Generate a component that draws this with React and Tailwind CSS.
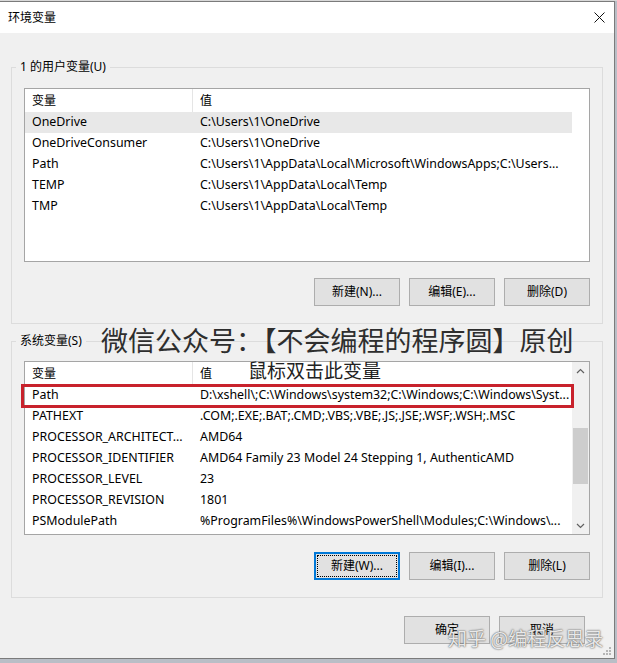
import React from 'react';

const FONT = { fontFamily: '"Noto Sans", "Noto Sans CJK SC", sans-serif' };

const userVars = [
  ['OneDrive', 'C:\\Users\\1\\OneDrive'],
  ['OneDriveConsumer', 'C:\\Users\\1\\OneDrive'],
  ['Path', 'C:\\Users\\1\\AppData\\Local\\Microsoft\\WindowsApps;C:\\Users...'],
  ['TEMP', 'C:\\Users\\1\\AppData\\Local\\Temp'],
  ['TMP', 'C:\\Users\\1\\AppData\\Local\\Temp'],
];

const sysVars = [
  ['Path', 'D:\\xshell\\;C:\\Windows\\system32;C:\\Windows;C:\\Windows\\Syst...'],
  ['PATHEXT', '.COM;.EXE;.BAT;.CMD;.VBS;.VBE;.JS;.JSE;.WSF;.WSH;.MSC'],
  ['PROCESSOR_ARCHITECT...', 'AMD64'],
  ['PROCESSOR_IDENTIFIER', 'AMD64 Family 23 Model 24 Stepping 1, AuthenticAMD'],
  ['PROCESSOR_LEVEL', '23'],
  ['PROCESSOR_REVISION', '1801'],
  ['PSModulePath', '%ProgramFiles%\\WindowsPowerShell\\Modules;C:\\Windows\\...'],
];

function WinButton({ children, focused }) {
  return (
    <button
      type="button"
      className={
        'h-[28px] w-[86px] bg-[#e1e1e1] text-[12px] text-black flex items-center justify-center ' +
        (focused ? 'border-2 border-[#0078d7] p-[1px]' : 'border border-[#adadad]')
      }
    >
      {focused ? (
        <span className="w-full h-full flex items-center justify-center border border-dotted border-black">
          {children}
        </span>
      ) : (
        children
      )}
    </button>
  );
}

function Row({ name, value, selected, marked }) {
  return (
    <div className={'relative flex h-[21px] items-center text-[12.4px] ' + (selected ? 'bg-[#e8e8e8]' : '')}>
      <div className="w-[168px] shrink-0 pl-[7px] whitespace-nowrap overflow-hidden">{name}</div>
      <div className="flex-1 pl-[7px] whitespace-nowrap overflow-hidden">{value}</div>
      {marked && (
        <div className="absolute -left-[4px] -right-[2px] -top-[1px] -bottom-[2px] border-[3px] border-[#c8222c]" />
      )}
    </div>
  );
}

function ListBox({ rows, scroll, markFirst }) {
  return (
    <div className="mx-[12px] h-[174px] border border-[#a5a5a5] bg-white flex">
      <div className="flex-1 flex flex-col">
        <div className="flex h-[23px] items-center">
          <div className="w-[168px] shrink-0 pl-[7px] h-full flex items-center border-r border-[#e5e5e5]">变量</div>
          <div className="flex-1 pl-[7px]">值</div>
        </div>
        {rows.map(([n, v], i) => (
          <Row key={n} name={n} value={v} selected={!scroll && i === 0} marked={markFirst && i === 0} />
        ))}
      </div>
      {scroll ? (
        <div className="w-[17px] bg-[#f0f0f0] flex flex-col items-center">
          <div className="h-[17px] w-full flex items-center justify-center">
            <svg width="9" height="6" viewBox="0 0 9 6">
              <path d="M1 5 L4.5 1.5 L8 5" fill="none" stroke="#606060" strokeWidth="1.2" />
            </svg>
          </div>
          <div className="mt-[49px] h-[56px] w-[15px] bg-[#cdcdcd]" />
          <div className="flex-1" />
          <div className="h-[17px] w-full flex items-center justify-center">
            <svg width="9" height="6" viewBox="0 0 9 6">
              <path d="M1 1 L4.5 4.5 L8 1" fill="none" stroke="#606060" strokeWidth="1.2" />
            </svg>
          </div>
        </div>
      ) : (
        <div className="w-[17px]" />
      )}
    </div>
  );
}

export default function App() {
  return (
    <div className="w-[617px] h-[663px] bg-[#b9bec6] overflow-hidden text-[12px] text-black" style={FONT}>
      <div className="h-[1px] bg-[#d8d8d8]" />
      <div className="relative w-[615px] h-[658px] bg-[#f0f0f0] border-t border-r border-b border-[#7b7b7b] flex flex-col">
        {/* title bar */}
        <div className="h-[31px] bg-white flex items-center justify-between pl-[8px] pr-[9px]">
          <span>环境变量</span>
          <svg width="11" height="11" viewBox="0 0 11 11">
            <path d="M0.5 0.5 L10.5 10.5 M10.5 0.5 L0.5 10.5" stroke="#111" strokeWidth="1" />
          </svg>
        </div>

        <div className="px-[11px] flex flex-col">
          <fieldset className="mt-[25px] border border-[#dcdcdc]">
            <legend className="ml-[4px] px-[4px] leading-[18px]">1 的用户变量(U)</legend>
            <div className="mt-[12px]">
              <ListBox rows={userVars} />
            </div>
            <div className="mt-[16px] mx-[12px] mb-[17px] flex justify-end gap-[9px]">
              <WinButton>新建(N)...</WinButton>
              <WinButton>编辑(E)...</WinButton>
              <WinButton>删除(D)</WinButton>
            </div>
          </fieldset>

          <fieldset className="mt-[8px] border border-[#dcdcdc]">
            <legend className="ml-[4px] px-[4px] leading-[18px]">系统变量(S)</legend>
            <div className="mt-[11px]">
              <ListBox rows={sysVars} scroll markFirst />
            </div>
            <div className="mt-[17px] mx-[12px] mb-[17px] flex justify-end gap-[9px]">
              <WinButton focused>新建(W)...</WinButton>
              <WinButton>编辑(I)...</WinButton>
              <WinButton>删除(L)</WinButton>
            </div>
          </fieldset>

          <div className="mt-[18px] pr-[18px] flex justify-end gap-[9px]">
            <WinButton>确定</WinButton>
            <WinButton>取消</WinButton>
          </div>
        </div>

        {/* watermark annotations */}
        <div className="absolute left-[101px] top-[319px] text-[27px] leading-[38px] text-[#2e2e2e] whitespace-nowrap" style={{ fontFamily: '"Noto Sans CJK SC", sans-serif' }}>
          微信公众号：【不会编程的程序圆】原创
        </div>
        <div className="absolute left-[248px] top-[355px] text-[19px] leading-[26px] text-[#222] whitespace-nowrap" style={{ fontFamily: '"Noto Sans CJK SC", sans-serif' }}>
          鼠标双击此变量
        </div>
        <div
          className="absolute left-[448px] top-[623px] text-[19px] leading-[26px] text-white/85 whitespace-nowrap [text-shadow:0_0_2px_#555,0_0_1px_#777]"
          style={{ fontFamily: '"Noto Sans CJK SC", sans-serif' }}
        >
          知乎 @编程反思录
        </div>

        {/* resize grip */}
        <svg className="absolute right-[2px] bottom-[2px]" width="9" height="9" viewBox="0 0 9 9">
          <rect x="6" y="0" width="2" height="2" fill="#b5b5b5" />
          <rect x="3" y="3" width="2" height="2" fill="#b5b5b5" />
          <rect x="6" y="3" width="2" height="2" fill="#b5b5b5" />
          <rect x="0" y="6" width="2" height="2" fill="#b5b5b5" />
          <rect x="3" y="6" width="2" height="2" fill="#b5b5b5" />
          <rect x="6" y="6" width="2" height="2" fill="#b5b5b5" />
        </svg>
      </div>
    </div>
  );
}
